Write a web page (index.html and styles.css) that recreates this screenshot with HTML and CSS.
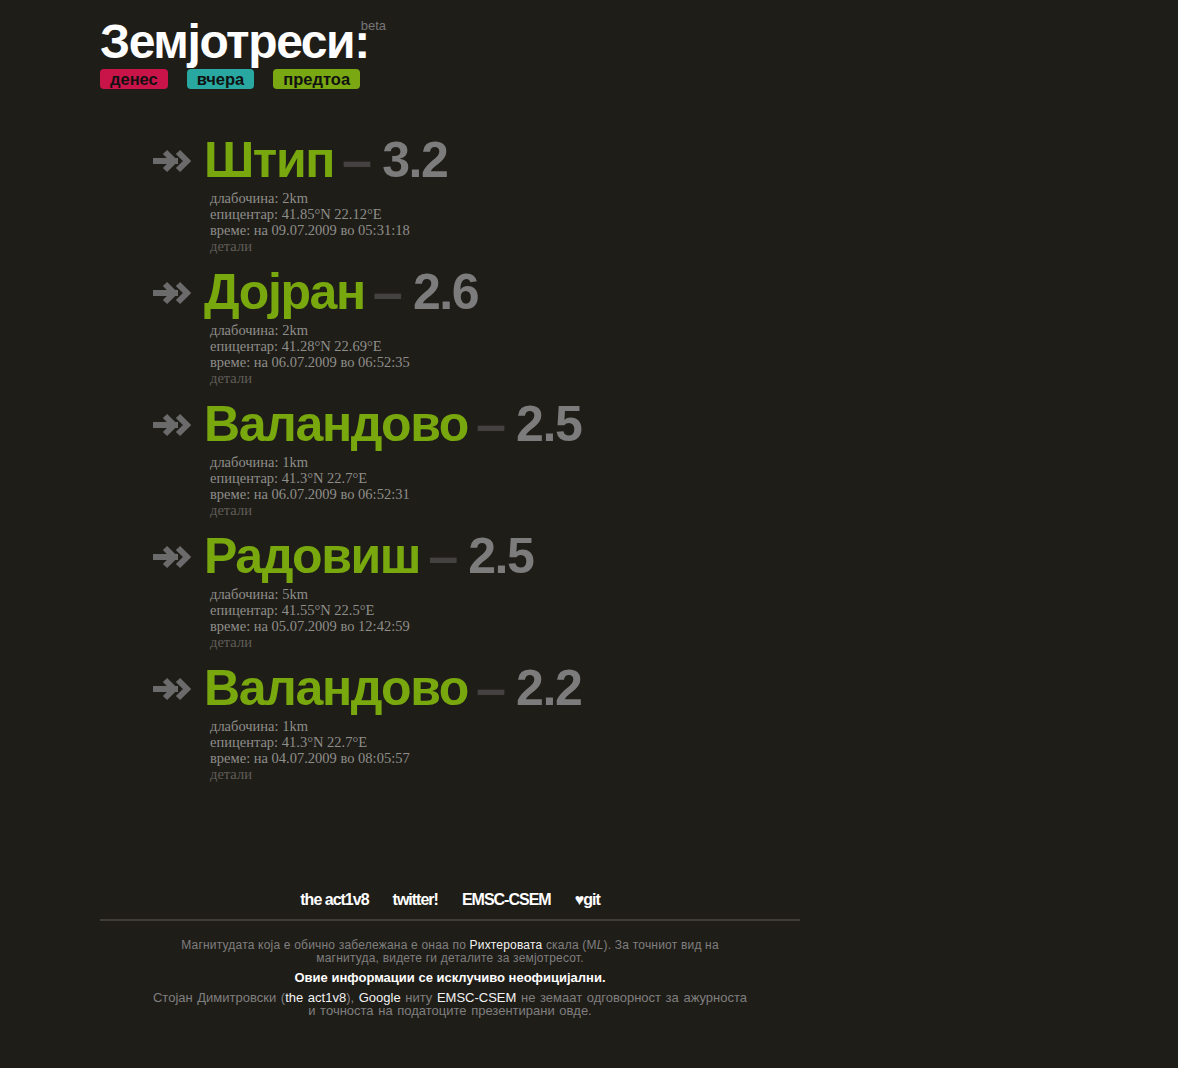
FILE: index.html
```html
<!DOCTYPE html>
<html lang="mk">
<head>
<meta charset="utf-8">
<title>Земјотреси</title>
<link rel="stylesheet" href="styles.css">
</head>
<body>
<div class="page">
  <header class="header">
    <h1 class="title">Земјотреси:<span class="beta">beta</span></h1>
    <nav class="tags">
      <a class="tag tag-today" href="#">денес</a>
      <a class="tag tag-yesterday" href="#">вчера</a>
      <a class="tag tag-before" href="#">предтоа</a>
    </nav>
  </header>

  <main class="quakes">
    <section class="quake">
      <h2 class="quake-head">
        <svg class="arrow" width="42" height="24" viewBox="0 0 42 24"><path d="M2 12H27M14 3L23 12L14 21M27 3L36 12L27 21" fill="none" stroke="#6b6b6b" stroke-width="6"/></svg>
        <span class="place">Штип</span><span class="dash">–</span><span class="mag">3.2</span>
      </h2>
      <div class="details">
        <div>длабочина: 2km</div>
        <div>епицентар: 41.85°N 22.12°E</div>
        <div>време: на 09.07.2009 во 05:31:18</div>
        <a class="more" href="#">детали</a>
      </div>
    </section>
    <section class="quake">
      <h2 class="quake-head">
        <svg class="arrow" width="42" height="24" viewBox="0 0 42 24"><path d="M2 12H27M14 3L23 12L14 21M27 3L36 12L27 21" fill="none" stroke="#6b6b6b" stroke-width="6"/></svg>
        <span class="place">Дојран</span><span class="dash">–</span><span class="mag">2.6</span>
      </h2>
      <div class="details">
        <div>длабочина: 2km</div>
        <div>епицентар: 41.28°N 22.69°E</div>
        <div>време: на 06.07.2009 во 06:52:35</div>
        <a class="more" href="#">детали</a>
      </div>
    </section>
    <section class="quake">
      <h2 class="quake-head">
        <svg class="arrow" width="42" height="24" viewBox="0 0 42 24"><path d="M2 12H27M14 3L23 12L14 21M27 3L36 12L27 21" fill="none" stroke="#6b6b6b" stroke-width="6"/></svg>
        <span class="place">Валандово</span><span class="dash">–</span><span class="mag">2.5</span>
      </h2>
      <div class="details">
        <div>длабочина: 1km</div>
        <div>епицентар: 41.3°N 22.7°E</div>
        <div>време: на 06.07.2009 во 06:52:31</div>
        <a class="more" href="#">детали</a>
      </div>
    </section>
    <section class="quake">
      <h2 class="quake-head">
        <svg class="arrow" width="42" height="24" viewBox="0 0 42 24"><path d="M2 12H27M14 3L23 12L14 21M27 3L36 12L27 21" fill="none" stroke="#6b6b6b" stroke-width="6"/></svg>
        <span class="place">Радовиш</span><span class="dash">–</span><span class="mag">2.5</span>
      </h2>
      <div class="details">
        <div>длабочина: 5km</div>
        <div>епицентар: 41.55°N 22.5°E</div>
        <div>време: на 05.07.2009 во 12:42:59</div>
        <a class="more" href="#">детали</a>
      </div>
    </section>
    <section class="quake">
      <h2 class="quake-head">
        <svg class="arrow" width="42" height="24" viewBox="0 0 42 24"><path d="M2 12H27M14 3L23 12L14 21M27 3L36 12L27 21" fill="none" stroke="#6b6b6b" stroke-width="6"/></svg>
        <span class="place">Валандово</span><span class="dash">–</span><span class="mag">2.2</span>
      </h2>
      <div class="details">
        <div>длабочина: 1km</div>
        <div>епицентар: 41.3°N 22.7°E</div>
        <div>време: на 04.07.2009 во 08:05:57</div>
        <a class="more" href="#">детали</a>
      </div>
    </section>
  </main>

  <footer class="footer">
    <nav class="links">
      <a href="#">the act1v8</a>
      <a href="#">twitter!</a>
      <a href="#">EMSC-CSEM</a>
      <a href="#">♥git</a>
    </nav>
    <div class="notes">
      <p class="small">Магнитудата која е обично забележана е онаа по <a href="#">Рихтеровата</a> скала (M<i>L</i>). За точниот вид на магнитуда, видете ги деталите за земјотресот.</p>
      <p class="strong">Овие информации се исклучиво неофицијални.</p>
      <p class="wide">Стојан Димитровски (<a href="#">the act1v8</a>), <a href="#">Google</a> ниту <a href="#">EMSC-CSEM</a> не земаат одговорност за ажурноста и точноста на податоците презентирани овде.</p>
    </div>
  </footer>
</div>
</body>
</html>
```

FILE: styles.css
```css
html, body {
  margin: 0;
  padding: 0;
  background: #1f1d18;
}

body {
  font-family: "Liberation Sans", Arial, sans-serif;
  color: #808080;
}

a {
  text-decoration: none;
}

.page {
  width: 700px;
  margin-left: 100px;
  padding-top: 18px;
}

.header {
  display: flex;
  flex-direction: column;
  align-items: flex-start;
}

.title {
  margin: 0;
  font-size: 48px;
  line-height: 48px;
  font-weight: bold;
  color: #ffffff;
  letter-spacing: -1.4px;
  white-space: nowrap;
}

.beta {
  display: inline-block;
  vertical-align: top;
  margin-left: -8px;
  margin-top: 1px;
  font-size: 13px;
  line-height: 13px;
  font-weight: normal;
  letter-spacing: 0;
  color: #777777;
}

.tags {
  display: flex;
  gap: 19px;
  margin-top: 3px;
}

.tag {
  display: block;
  height: 20px;
  line-height: 20px;
  padding: 0 10px;
  border-radius: 4px;
  font-size: 16.5px;
  font-weight: bold;
  color: #111111;
}

.tag-today { background: #c9144a; }
.tag-yesterday { background: #28a8a0; }
.tag-before { background: #79a813; }

.quakes {
  display: flex;
  flex-direction: column;
  gap: 10px;
  margin-top: 43px;
  padding-left: 51px;
}

.quake-head {
  display: flex;
  align-items: center;
  margin: 0;
  height: 56px;
  font-size: 50px;
  line-height: 56px;
  font-weight: bold;
  letter-spacing: -1.4px;
  white-space: nowrap;
}

.arrow {
  flex: none;
  margin-right: 11px;
  margin-top: 1px;
}

.place {
  color: #78a80e;
}

.dash {
  color: #444240;
  font-size: 54px;
  letter-spacing: 0;
  margin: 0 10px 0 8px;
}

.mag {
  color: #7c7c7c;
}

.details {
  margin-top: 2px;
  padding-left: 59px;
  font-family: "Liberation Serif", "Times New Roman", serif;
  font-size: 14.5px;
  line-height: 16px;
  color: #8e8e8a;
}

.details .more {
  display: block;
  color: #5f5d58;
}

.footer {
  margin-top: 109px;
}

.links {
  display: flex;
  justify-content: center;
  gap: 24px;
  padding-bottom: 10px;
  border-bottom: 2px solid #403d37;
}

.links a {
  font-size: 16px;
  line-height: 18px;
  font-weight: bold;
  letter-spacing: -1px;
  color: #ffffff;
}

.notes {
  width: 600px;
  margin: 18px auto 0;
  text-align: center;
  font-size: 13px;
  line-height: 13px;
  color: #7f7f7f;
}

.notes p {
  margin: 0 0 6px;
}

.notes .small {
  width: 588px;
  margin-left: auto;
  margin-right: auto;
  font-size: 12px;
  letter-spacing: 0.2px;
}

.notes .wide {
  word-spacing: 1px;
}

.notes a {
  color: #f2f2f2;
}

.notes .strong {
  margin-bottom: 7px;
  font-weight: bold;
  color: #ffffff;
}
```
